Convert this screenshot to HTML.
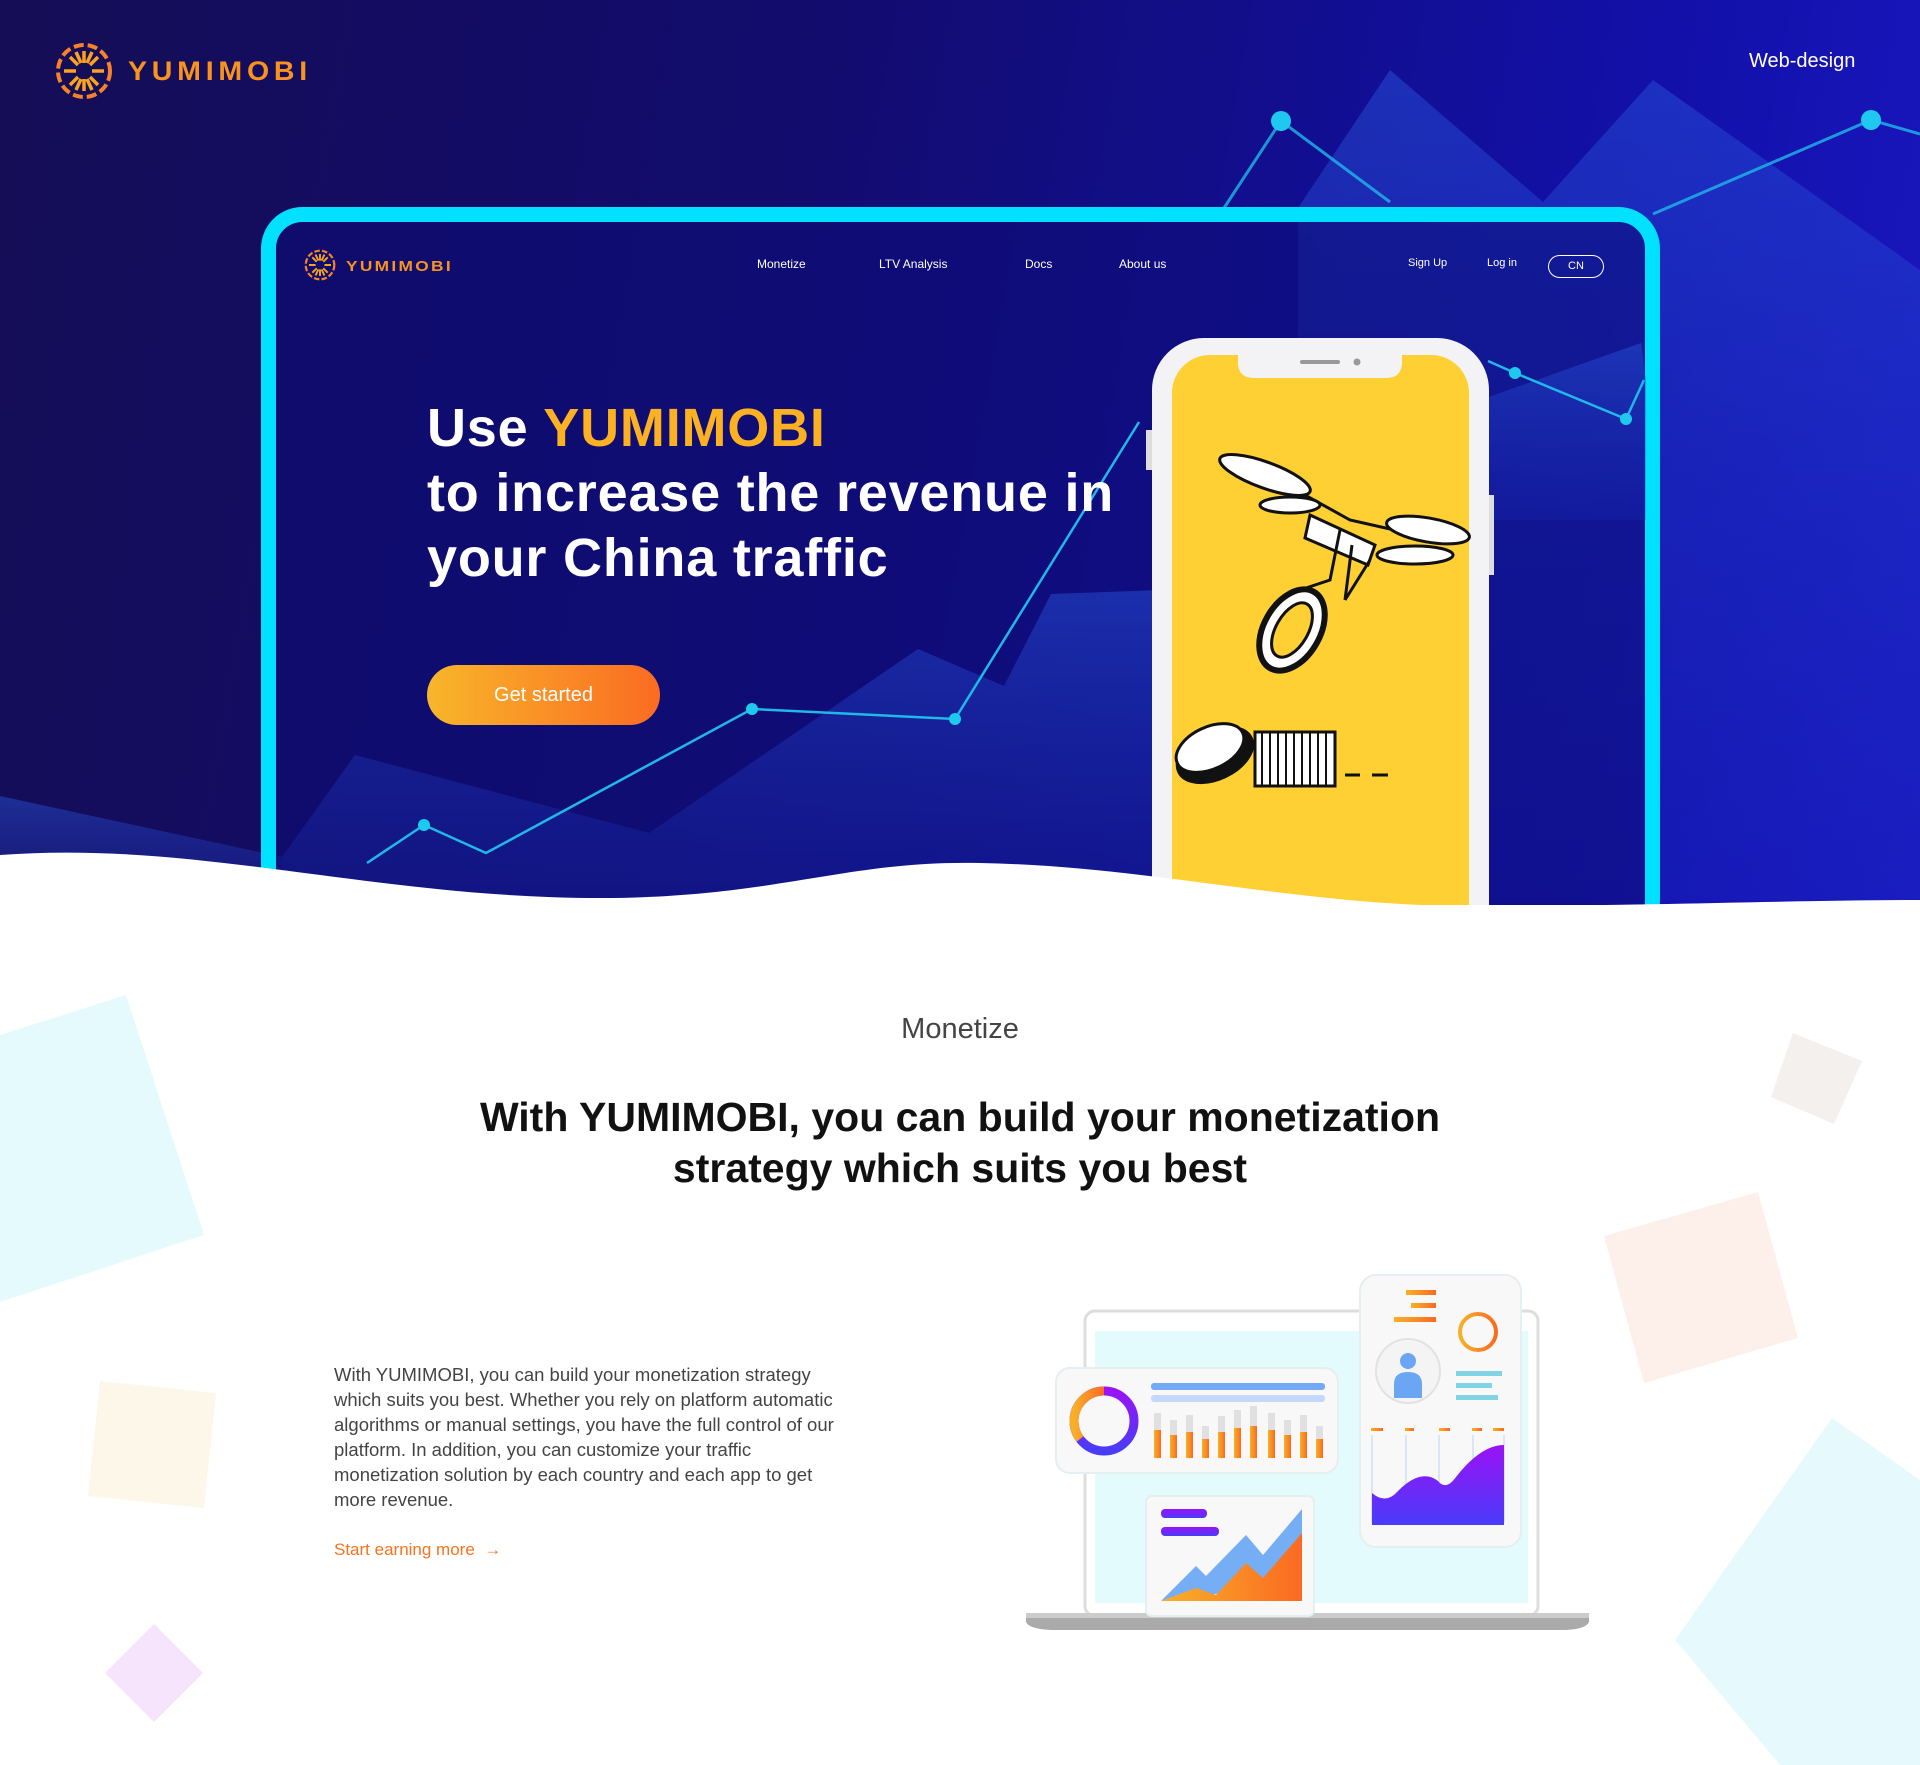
<!DOCTYPE html>
<html><head><meta charset="utf-8"><style>
*{margin:0;padding:0;box-sizing:border-box}
body{width:1920px;height:1765px;position:relative;overflow:hidden;background:#fff;font-family:"Liberation Sans",sans-serif}
.abs{position:absolute}
.hero{position:absolute;left:0;top:0;width:1920px;height:910px;background:linear-gradient(100deg,#150d55 0%,#120c6e 40%,#1210a8 80%,#1a18c0 100%)}
.nav a{position:absolute;color:#fff;font-size:12px;top:257px}
h1{position:absolute;left:427px;top:396px;color:#fff;font-size:54px;line-height:65px;font-weight:bold;letter-spacing:0.8px}
</style></head><body>
<div class="hero"></div>
<svg class="abs" style="left:0;top:0" width="1920" height="910" viewBox="0 0 1920 910">
<defs>
<linearGradient id="m1" x1="0" y1="0" x2="0" y2="1"><stop offset="0" stop-color="#2a58e0" stop-opacity=".45"/><stop offset="1" stop-color="#1a30c0" stop-opacity=".2"/></linearGradient>
</defs>
<polygon points="1298,208 1390,70 1543,202 1653,80 1920,270 1920,900 1298,900" fill="url(#m1)"/>
<polygon points="0,796 282,857 282,910 0,910" fill="url(#m1)"/>
<polyline points="1224,208 1281,121 1390,202" fill="none" stroke="#1fb8e8" stroke-width="3" opacity=".8"/>
<polyline points="1653,214 1871,120 1920,134" fill="none" stroke="#1fb8e8" stroke-width="3" opacity=".8"/>
<circle cx="1281" cy="121" r="10" fill="#1fc8ee"/><circle cx="1871" cy="120" r="10" fill="#1fc8ee"/>
<rect x="268" y="214" width="1384" height="720" rx="34" fill="#0c0c78" opacity=".55"/>
<rect x="268.5" y="214.5" width="1384" height="720" rx="34" fill="none" stroke="#00e1ff" stroke-width="15"/>
<polygon points="282,857 355,755 649,833 918,649 1004,686 1051,594 1160,590 1160,910 282,910" fill="url(#m1)"/>
<polygon points="1469,404 1641,343 1646,380 1646,520 1469,520" fill="url(#m1)"/>
<polyline points="367,863 424,825 486,853 752,709 955,719 1139,422" fill="none" stroke="#1fb8e8" stroke-width="2.5"/>
<polyline points="1488,361 1515,373 1626,419 1644,380" fill="none" stroke="#1fb8e8" stroke-width="2.5"/>
<circle cx="424" cy="825" r="6" fill="#1fc8ee"/><circle cx="752" cy="709" r="6" fill="#1fc8ee"/><circle cx="955" cy="719" r="6" fill="#1fc8ee"/><circle cx="1515" cy="373" r="6" fill="#1fc8ee"/><circle cx="1626" cy="419" r="6" fill="#1fc8ee"/>
<!-- logos -->
<g transform="translate(84,71)" fill="none" stroke="#f7822a" stroke-width="4">
<circle r="26" stroke-dasharray="10 4"/>
<g stroke="#f9a31e" stroke-width="3.5"><path d="M0,-8V-20M0,8V20M-8,0H-20M8,0H20M6,-6L14,-14M-6,6L-14,14M6,6L14,14M-6,-6L-14,-14M3,-8L8,-19M-3,8L-8,19M-3,-8L-8,-19M3,8L8,19"/></g>
</g>
<text x="128" y="80" fill="#f7931e" font-size="27" font-weight="bold" font-family="Liberation Sans" letter-spacing="4.5" textLength="184" lengthAdjust="spacingAndGlyphs">YUMIMOBI</text>
<g transform="translate(320,265) scale(0.55)" fill="none" stroke="#f7822a" stroke-width="4">
<circle r="26" stroke-dasharray="10 4"/>
<g stroke="#f9a31e" stroke-width="3.5"><path d="M0,-8V-20M0,8V20M-8,0H-20M8,0H20M6,-6L14,-14M-6,6L-14,14M6,6L14,14M-6,-6L-14,-14M3,-8L8,-19M-3,8L-8,19M-3,-8L-8,-19M3,8L8,19"/></g>
</g>
<text x="346" y="271" fill="#f7931e" font-size="15" font-weight="bold" font-family="Liberation Sans" letter-spacing="2" textLength="107" lengthAdjust="spacingAndGlyphs">YUMIMOBI</text>
<!-- phone -->
<rect x="1152" y="338" width="337" height="620" rx="52" fill="#f3f3f6"/>
<rect x="1146" y="430" width="6" height="40" fill="#ddd"/><rect x="1489" y="495" width="5" height="80" fill="#ddd"/>
<rect x="1172" y="355" width="297" height="600" rx="38" fill="#fed033"/>
<path d="M1238,355 H1402 V362 Q1402,378 1386,378 H1254 Q1238,378 1238,362Z" fill="#f3f3f6"/>
<rect x="1300" y="360" width="40" height="4" rx="2" fill="#999"/><circle cx="1357" cy="362" r="3.5" fill="#999"/>
<!-- drone -->
<g stroke="#111" stroke-width="3" fill="none">
<path d="M1260,470 L1350,520 L1430,538"/>
<ellipse cx="1265" cy="475" rx="48" ry="13" fill="#fff" transform="rotate(20 1265 475)"/>
<ellipse cx="1428" cy="530" rx="42" ry="12" fill="#fff" transform="rotate(10 1428 530)"/>
<ellipse cx="1415" cy="555" rx="38" ry="9" fill="#fff"/>
<ellipse cx="1290" cy="505" rx="30" ry="8" fill="#fff"/>
<path d="M1310,515 L1375,545 L1368,565 L1305,538Z" fill="#fff"/>
<path d="M1340,530 L1330,580 L1300,590 M1352,545 L1345,600 M1370,560 L1345,600"/>
<ellipse cx="1292" cy="630" rx="28" ry="44" fill="#fff" transform="rotate(30 1292 630)" stroke-width="6"/>
<ellipse cx="1292" cy="630" rx="16" ry="30" fill="#fed033" transform="rotate(30 1292 630)"/>
</g>
<!-- coins -->
<g stroke="#111" stroke-width="3">
<rect x="1255" y="732" width="80" height="54" fill="#fff"/>
<path d="M1262,732v54M1270,732v54M1278,732v54M1286,732v54M1294,732v54M1302,732v54M1310,732v54M1318,732v54M1326,732v54" stroke-width="2"/>
<ellipse cx="1215" cy="755" rx="40" ry="24" fill="#111" transform="rotate(-25 1215 755)"/>
<ellipse cx="1210" cy="748" rx="36" ry="21" fill="#fff" transform="rotate(-25 1210 748)"/>
<path d="M1345,775H1360M1372,775H1388"/>
</g>
<!-- white wave -->
<path d="M0,855 C200,840 380,900 612,898 C780,896 850,860 980,863 C1150,866 1300,906 1470,906 C1650,906 1800,900 1920,900 V910 H0Z" fill="#fff"/>
</svg>
<div class="abs" style="left:0;top:905px;width:1920px;height:10px;background:#fff"></div>
<div class="abs" style="left:1749px;top:50px;color:#fff;font-size:20px">Web-design</div>
<div class="nav">
<a style="left:757px">Monetize</a><a style="left:879px">LTV Analysis</a><a style="left:1025px">Docs</a><a style="left:1119px">About us</a>
<a style="left:1408px;font-size:11px">Sign Up</a><a style="left:1487px;font-size:11px">Log in</a>
</div>
<div class="abs" style="left:1548px;top:255px;width:56px;height:23px;border:1.5px solid #fff;border-radius:12px;color:#fff;font-size:11px;text-align:center;line-height:20px">CN</div>
<h1>Use <span style="color:#fbb121">YUMIMOBI</span><br>to increase the revenue in<br>your China traffic</h1>
<div class="abs" style="left:427px;top:665px;width:233px;height:60px;border-radius:30px;background:linear-gradient(90deg,#f8b62a,#fb6b22);color:#fff;font-size:20px;text-align:center;line-height:60px">Get started</div>

<!-- decor -->
<svg class="abs" style="left:0;top:940px" width="1920" height="825">
<polygon points="0,95 126,55 204,295 0,362" fill="#e4fafd"/>
<polygon points="100,441 216,453 204,568 88,556" fill="#fdf7ea"/>
<polygon points="154,684 203,733 154,782 105,733" fill="#f5e4fb"/>
<polygon points="1793,93 1862,121 1834,184 1771,157" fill="#f4f0ee"/>
<polygon points="1604,296 1758,252 1798,398 1644,443" fill="#fdf0ea"/>
<polygon points="1832,478 1920,540 1920,825 1780,825 1675,700" fill="#e6fafd"/>
</svg>
<div class="abs" style="left:0;top:1013px;width:1920px;text-align:center;color:#444;font-size:29px">Monetize</div>
<div class="abs" style="left:0;top:1092px;width:1920px;text-align:center;color:#111;font-size:41px;line-height:51px;font-weight:bold">With YUMIMOBI, you can build your monetization<br>strategy which suits you best</div>
<div class="abs" style="left:334px;top:1362px;width:522px;color:#444;font-size:18.5px;line-height:25px">With YUMIMOBI, you can build your monetization strategy which suits you best. Whether you rely on platform automatic algorithms or manual settings, you have the full control of our platform. In addition, you can customize your traffic monetization solution by each country and each app to get more revenue.</div>
<div class="abs" style="left:334px;top:1540px;color:#f7731e;font-size:17px">Start earning more &nbsp;→</div>

<!-- illustration -->
<svg class="abs" style="left:1026px;top:1273px" width="570" height="370" viewBox="0 0 570 370">
<defs>
<linearGradient id="or" x1="0" x2="1"><stop offset="0" stop-color="#f8b028"/><stop offset="1" stop-color="#fb6a22"/></linearGradient>
<linearGradient id="pu" x1="0" y1="0" x2="0" y2="1"><stop offset="0" stop-color="#9a12f6"/><stop offset="1" stop-color="#4a3cf8"/></linearGradient>
</defs>
<rect x="59" y="38" width="453" height="305" rx="10" fill="#fff" stroke="#ddd" stroke-width="3"/>
<rect x="69" y="58" width="433" height="272" fill="#e4fbfd"/>
<path d="M0,341 H563 V349 Q560,356 540,357 H25 Q3,356 0,349Z" fill="#aaa"/>
<rect x="0" y="340" width="563" height="5" fill="#ccc"/>
<rect x="30" y="95" width="282" height="105" rx="14" fill="#f8f8f8" stroke="#e5eef0" stroke-width="2"/>
<circle cx="78" cy="148" r="30" fill="none" stroke="url(#pu)" stroke-width="9"/>
<path d="M78,118 A30,30 0 0 0 54,166" fill="none" stroke="url(#or)" stroke-width="9"/>
<rect x="125" y="110" width="174" height="7" rx="3" fill="#74aaf5"/><rect x="125" y="122" width="174" height="7" rx="3" fill="#c4d8fb"/>
<g fill="#e0e0e0"><rect x="128" y="140" width="7" height="45"/><rect x="144" y="147" width="7" height="38"/><rect x="160" y="142" width="7" height="43"/><rect x="176" y="153" width="7" height="32"/><rect x="192" y="143" width="7" height="42"/><rect x="208" y="137" width="7" height="48"/><rect x="224" y="133" width="7" height="52"/><rect x="242" y="140" width="7" height="45"/><rect x="258" y="147" width="7" height="38"/><rect x="274" y="142" width="7" height="43"/><rect x="290" y="153" width="7" height="32"/></g>
<g fill="url(#or)"><rect x="128" y="157" width="7" height="28"/><rect x="144" y="162" width="7" height="23"/><rect x="160" y="159" width="7" height="26"/><rect x="176" y="166" width="7" height="19"/><rect x="192" y="159" width="7" height="26"/><rect x="208" y="155" width="7" height="30"/><rect x="224" y="153" width="7" height="32"/><rect x="242" y="157" width="7" height="28"/><rect x="258" y="162" width="7" height="23"/><rect x="274" y="159" width="7" height="26"/><rect x="290" y="166" width="7" height="19"/></g>
<rect x="120" y="223" width="168" height="120" rx="6" fill="#f8f8f8" stroke="#e5eef0" stroke-width="2"/>
<rect x="135" y="236" width="46" height="9" rx="4" fill="url(#pu)"/>
<rect x="135" y="254" width="58" height="9" rx="4" fill="url(#pu)"/>
<path d="M135,328 L170,293 L180,303 L220,262 L237,282 L276,236 V310Z" fill="#76aef6"/>
<path d="M135,328 L170,315 L190,322 L220,290 L237,305 L276,260 V328Z" fill="url(#or)"/>
<rect x="334" y="2" width="161" height="272" rx="16" fill="#f8f8f8" stroke="#e5eef0" stroke-width="2"/>
<rect x="380" y="17" width="30" height="5" fill="url(#or)"/><rect x="385" y="30" width="25" height="5" fill="url(#or)"/><rect x="368" y="44" width="42" height="5" fill="url(#or)"/>
<circle cx="452" cy="59" r="18" fill="none" stroke="url(#or)" stroke-width="4"/>
<circle cx="382" cy="98" r="32" fill="#f4f4f4" stroke="#e2e2e2" stroke-width="2"/>
<circle cx="382" cy="88" r="8" fill="#6aa6f4"/><path d="M368,125 V111 Q368,99 382,99 Q396,99 396,111 V125Z" fill="#6aa6f4"/>
<rect x="430" y="98" width="46" height="5" fill="#80d4e4"/><rect x="430" y="110" width="36" height="5" fill="#80d4e4"/><rect x="430" y="122" width="42" height="5" fill="#80d4e4"/>
<g fill="url(#or)"><rect x="345" y="155" width="12" height="3"/><rect x="379" y="155" width="9" height="3"/><rect x="413" y="155" width="11" height="3"/><rect x="446" y="155" width="10" height="3"/><rect x="467" y="155" width="11" height="3"/></g>
<g stroke="#b8d4f4"><path d="M346,162V250M380,162V250M413,162V250M447,162V250M478,162V250"/></g>
<path d="M346,220 Q360,232 372,218 Q395,195 412,208 Q420,218 430,204 Q455,172 478,172 V252 H346Z" fill="url(#pu)"/>
</svg>
</body></html>
